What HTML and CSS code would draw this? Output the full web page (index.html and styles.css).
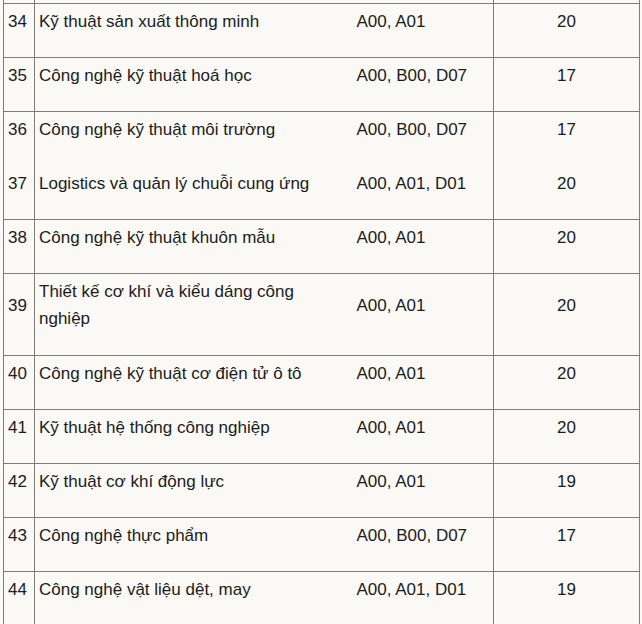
FILE: index.html
```html
<!DOCTYPE html>
<html lang="vi">
<head>
<meta charset="utf-8">
<title>Bảng điểm chuẩn</title>
<link rel="stylesheet" href="styles.css">
</head>
<body>
<table class="scores">
  <colgroup>
    <col class="c-no">
    <col class="c-name">
    <col class="c-code">
    <col class="c-score">
  </colgroup>
  <tbody>
    <tr class="cut"><td></td><td class="name"></td><td class="code"></td><td></td></tr>
    <tr><td class="no"><div class="t">34</div></td><td class="name"><div class="t">Kỹ thuật sản xuất thông minh</div></td><td class="code"><div class="t">A00, A01</div></td><td class="score"><div class="t">20</div></td></tr>
    <tr><td class="no"><div class="t">35</div></td><td class="name"><div class="t">Công nghệ kỹ thuật hoá học</div></td><td class="code"><div class="t">A00, B00, D07</div></td><td class="score"><div class="t">17</div></td></tr>
    <tr class="open-bottom"><td class="no"><div class="t">36</div></td><td class="name"><div class="t">Công nghệ kỹ thuật môi trường</div></td><td class="code"><div class="t">A00, B00, D07</div></td><td class="score"><div class="t">17</div></td></tr>
    <tr class="open-top"><td class="no"><div class="t">37</div></td><td class="name"><div class="t">Logistics và quản lý chuỗi cung ứng</div></td><td class="code"><div class="t">A00, A01, D01</div></td><td class="score"><div class="t">20</div></td></tr>
    <tr><td class="no"><div class="t">38</div></td><td class="name"><div class="t">Công nghệ kỹ thuật khuôn mẫu</div></td><td class="code"><div class="t">A00, A01</div></td><td class="score"><div class="t">20</div></td></tr>
    <tr class="tall"><td class="no"><div class="t">39</div></td><td class="name"><div class="t">Thiết kế cơ khí và kiểu dáng công nghiệp</div></td><td class="code"><div class="t">A00, A01</div></td><td class="score"><div class="t">20</div></td></tr>
    <tr><td class="no"><div class="t">40</div></td><td class="name"><div class="t">Công nghệ kỹ thuật cơ điện tử ô tô</div></td><td class="code"><div class="t">A00, A01</div></td><td class="score"><div class="t">20</div></td></tr>
    <tr><td class="no"><div class="t">41</div></td><td class="name"><div class="t">Kỹ thuật hệ thống công nghiệp</div></td><td class="code"><div class="t">A00, A01</div></td><td class="score"><div class="t">20</div></td></tr>
    <tr><td class="no"><div class="t">42</div></td><td class="name"><div class="t">Kỹ thuật cơ khí động lực</div></td><td class="code"><div class="t">A00, A01</div></td><td class="score"><div class="t">19</div></td></tr>
    <tr><td class="no"><div class="t">43</div></td><td class="name"><div class="t">Công nghệ thực phẩm</div></td><td class="code"><div class="t">A00, B00, D07</div></td><td class="score"><div class="t">17</div></td></tr>
    <tr><td class="no"><div class="t">44</div></td><td class="name"><div class="t">Công nghệ vật liệu dệt, may</div></td><td class="code"><div class="t">A00, A01, D01</div></td><td class="score"><div class="t">19</div></td></tr>
  </tbody>
</table>
</body>
</html>
```
FILE: styles.css
```css
html, body {
  margin: 0;
  padding: 0;
  background: #faf9f6;
}

body {
  font-family: "Liberation Sans", Arial, sans-serif;
  font-size: 17px;
  color: #1c1c1c;
  overflow: hidden;
}

.scores {
  border-collapse: collapse;
  table-layout: fixed;
  width: 637px;
  margin-left: 3px;
}

.c-no { width: 31px; }
.c-name { width: 306px; }
.c-code { width: 153px; }
.c-score { width: 146px; }

.scores td {
  border: 1px solid #7d7d7a;
  padding: 4px 4px 2px;
  vertical-align: middle;
  text-align: left;
}

.scores td.name { border-right: none; }
.scores td.code { border-left: none; padding-left: 16px; }
.scores td.score { text-align: center; }

.scores .t {
  line-height: 27px;
  margin-bottom: 20px;
}

.scores tr.cut td {
  border-top: none;
  height: 3px;
  padding: 0;
}

.scores tr.tall td { padding-bottom: 3px; }

.scores tr.open-bottom td { border-bottom-color: transparent; }
.scores tr.open-top td { border-top-color: transparent; }
```
